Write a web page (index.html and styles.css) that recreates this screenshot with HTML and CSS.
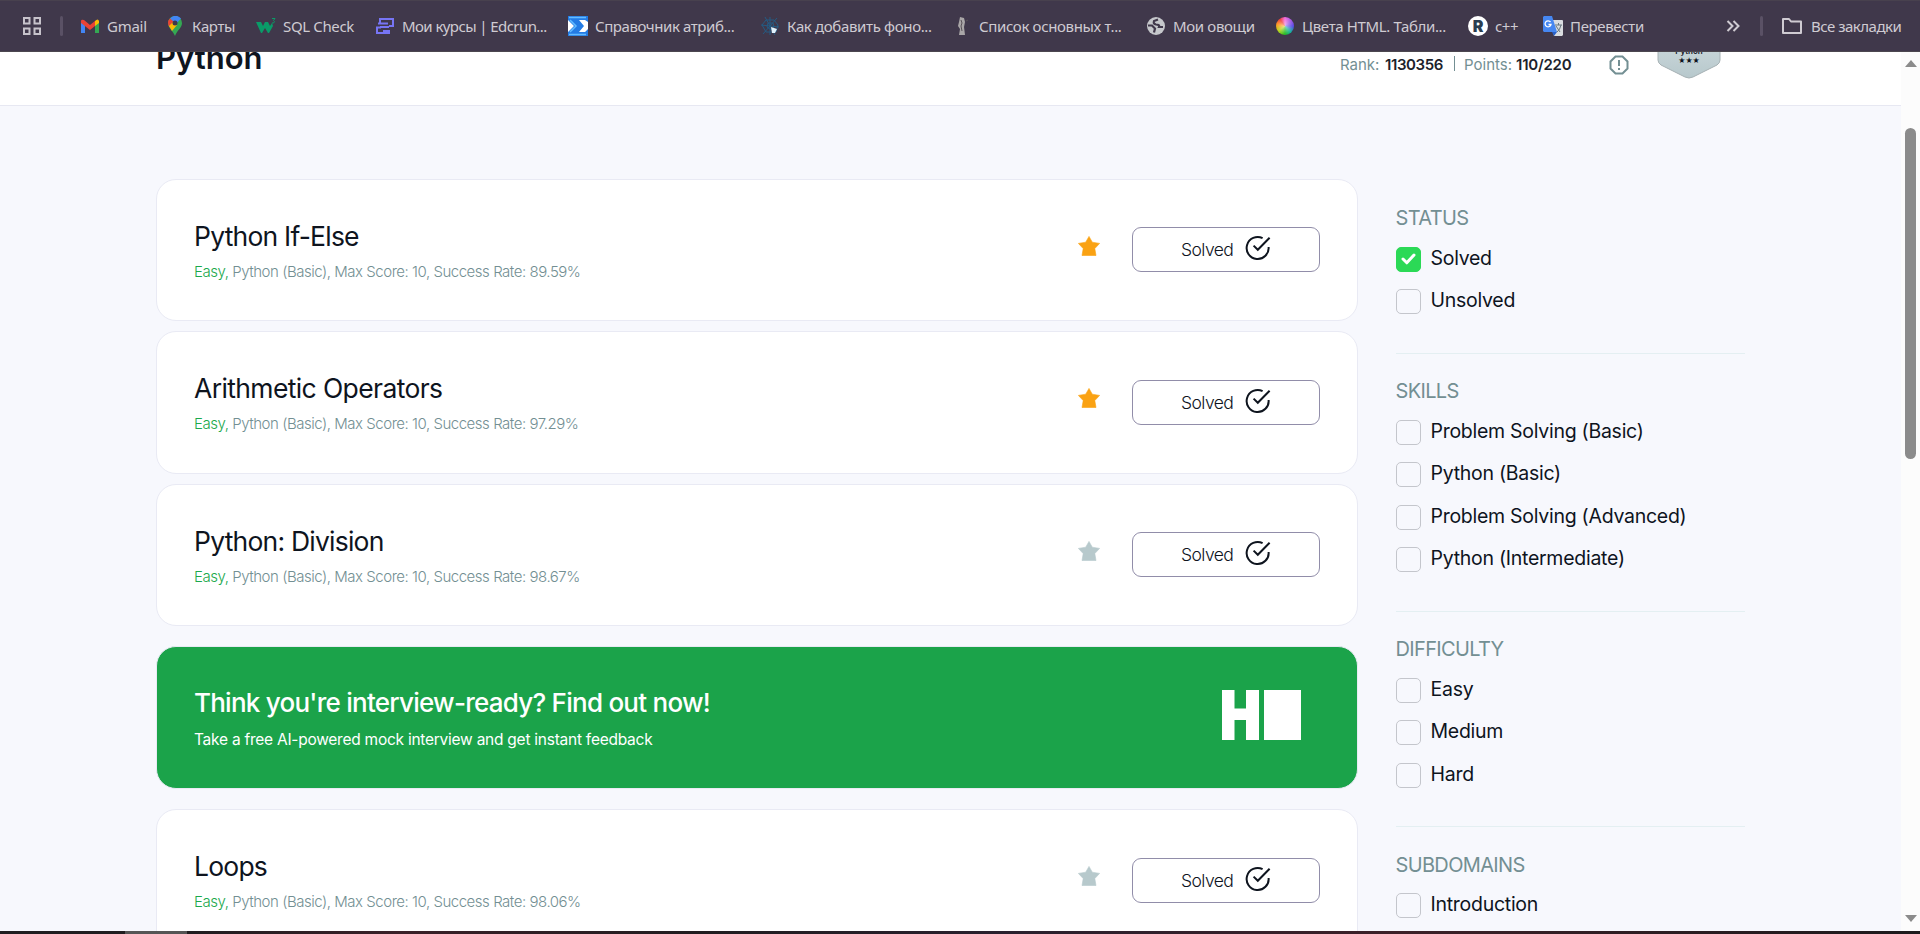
FILE: index.html
```html
<!DOCTYPE html>
<html lang="ru">
<head>
<meta charset="utf-8">
<title>Python</title>
<link rel="stylesheet" href="styles.css">
</head>
<body>
<svg width="0" height="0" class="defs">
  <symbol id="star" viewBox="0 0 22 20"><path d="M11 .4 14.300 6.200 21.600 7.400 16.800 12.600 18 19.500H4L5.200 12.600 .4 7.400 7.700 6.200Z" stroke="currentColor" stroke-width=".6" fill="currentColor" stroke-linejoin="round"/></symbol>
  <symbol id="done" viewBox="0 0 26 26"><path d="M17.600 3.200A11 11 0 1 0 23.600 12M8.600 10.600l4.200 4.200L24.600 2.800" fill="none" stroke="#0e141e" stroke-width="2"/></symbol>
</svg>
<div class="screen">
  <nav class="bookmarks">
    <svg class="apps" width="20" height="20" viewBox="0 0 20 20" fill="none" stroke="#c7c3cb" stroke-width="2"><path d="M2 2h5.500v5.500H2zM12.500 2H18v5.500h-5.500zM2 12.500h5.500V18H2zM12.500 12.500H18V18h-5.500z"/></svg>
    <i class="bar bar-left"></i>
    <a class="bm b1"><svg width="20" height="20" viewBox="0 0 20 20"><path d="M1 5v12h4V9z" fill="#4285f4"/><path d="M15 9v8h4V5z" fill="#34a853"/><path d="M15 5v5l4-3V5q-1-3-4 0z" fill="#fbbc04"/><path d="M1 7l9 7 5-4V5l-5 4-6-5q-3-1-3 1z" fill="#ea4335"/></svg><span>Gmail</span></a>
    <a class="bm b2"><svg width="20" height="20" viewBox="0 0 20 20"><path d="M3 7a7 7 0 0 1 14 0c0 5-5 7-7 13-2-5-7-8-7-13" fill="#34a853"/><path d="M5 2.500a7 7 0 0 1 11 0L10 9z" fill="#4285f4"/><path d="M5 2.500 9 6 4.500 11Q1 6 5 2.500" fill="#ea4335"/><path d="M4 10l5-5 3 4-5 6z" fill="#fbbc04"/><circle cx="10" cy="7" r="2.500" fill="#40384b"/></svg><span>Карты</span></a>
    <a class="bm b3"><svg width="20" height="20" viewBox="0 0 20 20"><path d="M0 6h5l2 4 2-4h3l2 4 2-3 1 3-4 7h-1l-3-5-3 5H5z" fill="#0a9b68"/><path d="M16 2.500h3l-1.500 2q2 1 0 2.500H16" stroke="#0a9b68" fill="none"/></svg><span>SQL Check</span></a>
    <a class="bm b4"><svg width="20" height="20" viewBox="0 0 20 20" fill="none" stroke="#7775f5" stroke-width="2"><path d="M5 7V3h13v7h-4M3 7.500h10M6 11.500H2V17h12v-2H8M5 11h9"/></svg><span>Мои курсы | Edcrun...</span></a>
    <a class="bm b5"><svg width="20" height="20" viewBox="0 0 20 20"><path d="M0 0h20v20H0z" fill="#fff"/><path d="M0 0h20v6l-3-2h-6l5 6-5 6h6l3-3v7H0v-4l6-6-6-6z" fill="#237be4"/><path d="M1 1.500h17M2 4l6 6-6 6M1 18.500h17" fill="none" stroke="#63bbff" stroke-width="1.500"/></svg><span>Справочник атриб...</span></a>
    <a class="bm b6"><svg width="20" height="20" viewBox="0 0 20 20" fill="none" stroke="#245b83"><path d="M1 9l18 2M5 1l10 18M17 2 3 18M10 1v18M6 4h8l4 5-2 7H6L2 9zM8 7h5l1 4-3 3-4-3z"/><path d="M11 11l6 2-2 4h-3z" fill="#e2f2fc" stroke="none"/></svg><span>Как добавить фоно...</span></a>
    <a class="bm b7"><svg width="20" height="20" viewBox="0 0 20 20"><path d="M8 1l4 1 1 4-1 5 1 8H7l1-6-2-3 1-4z" fill="#a9a6a7"/><path d="M9 4l1 3-1 3 1 5M14 5l2-1" stroke="#575057" stroke-width="1" fill="none"/></svg><span>Список основных т...</span></a>
    <a class="bm b8"><svg width="20" height="20" viewBox="0 0 20 20"><circle cx="10" cy="10" r="9" fill="#c5c7cb"/><path d="M12 3.500 8 5q-1 3 2 3.500 4 0 3 2.500h4M2 9.500h4l3 3-1 4" fill="none" stroke="#40384b" stroke-width="2.200"/></svg><span>Мои овощи</span></a>
    <a class="bm b9"><i class="wheel"></i><span>Цвета HTML. Табли...</span></a>
    <a class="bm b10"><i class="r-logo">R</i><span>c++</span></a>
    <a class="bm b11"><svg width="20" height="20" viewBox="0 0 20 20"><path d="M8 4h11q1 0 1 1v14l-1 1h-8z" fill="#d9dce0"/><path d="M1 0h8l5 16H1l-1-1V1z" fill="#4687f1"/><path d="M9 16h5l-3 4z" fill="#2860c8"/><path d="M12 9h7M15.500 7v2M13 10l4 6M18 9q-1 5-4 7" stroke="#67777f" fill="none"/><path d="M7.500 6A3 3 0 1 0 8 8.500H5.500" stroke="#fff" stroke-width="1.300" fill="none"/></svg><span>Перевести</span></a>
    <svg class="more" width="14" height="12" viewBox="0 0 14 12" fill="none" stroke="#cfcbd2" stroke-width="2"><path d="M1.500 1l5 5-5 5M7.500 1l5 5-5 5"/></svg>
    <i class="bar bar-right"></i>
    <a class="bm b12"><svg width="22" height="18" viewBox="0 0 22 18" fill="none" stroke="#cfcbd2" stroke-width="2" stroke-linejoin="round"><path d="M2 2h6l2 2.500h10V16H2z"/></svg><span>Все закладки</span></a>
  </nav>
  <div class="view">
    <div class="page">
      <header class="head">
        <h1>Python</h1>
        <div class="stats">
          <span class="lbl rank">Rank:</span><b class="rank-value">1130356</b><i class="sep"></i><span class="lbl points">Points:</span><b class="points-value">110/220</b>
          <svg class="info" width="20" height="20" viewBox="0 0 20 20" fill="none" stroke="#738f93" stroke-width="2"><path d="M6.500 1.500h7l5 5v7l-5 5h-7l-5-5v-7zM10 5v6M10 13v2"/></svg>
          <div class="badge"><svg width="64" height="70" viewBox="0 0 64 70"><defs><linearGradient id="bg" x2="0" y2="1"><stop stop-color="#dbe5e8"/><stop offset="1" stop-color="#b7c8cc"/></linearGradient></defs><path d="M1 1h62v50q0 3-3 5L36 68q-4 2-8 0L4 56q-3-2-3-5z" fill="url(#bg)" stroke="#a6b1b4"/></svg><span class="badge-name">Python</span><span class="badge-stars">★★★</span></div>
        </div>
      </header>
      <main class="main">
        <section class="list">
          <article class="card"><div class="info-text"><h2>Python If-Else</h2><p><em>Easy,</em> Python (Basic), Max Score: 10, Success Rate: 89.59%</p></div><svg class="star on"><use href="#star"/></svg><button>Solved<svg><use href="#done"/></svg></button></article>
          <article class="card"><div class="info-text"><h2 class="wide">Arithmetic Operators</h2><p><em>Easy,</em> Python (Basic), Max Score: 10, Success Rate: 97.29%</p></div><svg class="star on"><use href="#star"/></svg><button>Solved<svg><use href="#done"/></svg></button></article>
          <article class="card"><div class="info-text"><h2>Python: Division</h2><p><em>Easy,</em> Python (Basic), Max Score: 10, Success Rate: 98.67%</p></div><svg class="star"><use href="#star"/></svg><button>Solved<svg><use href="#done"/></svg></button></article>
          <article class="card promo"><div class="info-text"><h2>Think you're interview-ready? Find out now!</h2><p>Take a free AI-powered mock interview and get instant feedback</p></div><svg class="hr" width="79" height="50" viewBox="0 0 79 50" fill="#fff"><path d="M0 0h12.500v18.500h11.500V0h13v50H24V30H12.500v20H0zM42 0h37v50H42z"/></svg></article>
          <article class="card"><div class="info-text"><h2>Loops</h2><p><em>Easy,</em> Python (Basic), Max Score: 10, Success Rate: 98.06%</p></div><svg class="star"><use href="#star"/></svg><button>Solved<svg><use href="#done"/></svg></button></article>
        </section>
        <aside class="filters">
          <section><h3>STATUS</h3><label><i class="box checked"><svg width="15" height="12" viewBox="0 0 15 12"><path d="M2 6l3.800 3.800L13 2" fill="none" stroke="#fff" stroke-width="3" stroke-linecap="round" stroke-linejoin="round"/></svg></i><span>Solved</span></label><label><i class="box"></i><span>Unsolved</span></label></section>
          <section><h3>SKILLS</h3><label><i class="box"></i><span>Problem Solving (Basic)</span></label><label><i class="box"></i><span>Python (Basic)</span></label><label><i class="box"></i><span>Problem Solving (Advanced)</span></label><label><i class="box"></i><span>Python (Intermediate)</span></label></section>
          <section><h3>DIFFICULTY</h3><label><i class="box"></i><span>Easy</span></label><label><i class="box"></i><span>Medium</span></label><label><i class="box"></i><span>Hard</span></label></section>
          <section><h3>SUBDOMAINS</h3><label><i class="box"></i><span>Introduction</span></label></section>
        </aside>
      </main>
    </div>
    <div class="scroll"><i class="up"></i><i class="thumb"></i><i class="down"></i></div>
  </div>
  <footer class="edge"></footer>
</div>
</body>
</html>
```

FILE: styles.css
```css
* { box-sizing: border-box; }
body { margin: 0; font-family: Inter, sans-serif; color: #0e141e; }
h1, h2, h3, p { margin: 0; font-weight: 400; white-space: nowrap; }
i, em { font-style: normal; }
svg { flex: none; }
.defs { display: none; }
.screen { width: 1920px; height: 934px; overflow: hidden; display: flex; flex-direction: column; }

.bookmarks { flex: none; height: 52px; display: flex; align-items: center; background: #40384b; border-bottom: 1px solid #4c474f; border-top: 1px solid #48414e; color: #cfcbd2; padding-left: 22px; font: 15px "Noto Sans", sans-serif; }
.bm { display: flex; align-items: center; gap: 7px; white-space: nowrap; flex: none; }
.bar { width: 3px; height: 20px; border-radius: 2px; background: #5a5165; flex: none; }
.bar-left { margin: 0 17px 0 18px; }
.bm span { letter-spacing: -.35px; margin-top: -1px; }
.b1 { width: 85px; } .b2 { width: 91px; } .b3 { width: 119px; } .b4 { width: 193px; }
.b5 { width: 192px; } .b6 { width: 192px; } .b7 { width: 194px; } .b8 { width: 129px; }
.b9 { width: 193px; } .b10 { width: 75px; } .b11 { width: 183px; } .b12 { gap: 8px; }
.b1 span { letter-spacing: -.25px; }
.b4 span { letter-spacing: -.58px; }
.b5 span { letter-spacing: -.42px; }
.b12 span { letter-spacing: -.5px; }
.bar-right { margin: 0 18px 0 20px; }
.wheel { width: 18px; height: 18px; margin: 0 1px; border-radius: 50%; background: radial-gradient(#fff8, #fff0 65%), conic-gradient(#f26be0, #5b48e8 25%, #12b39c 38%, #22ba22 50%, #b9d51c 65%, #ff9a20 78%, #f03e3e 90%, #f26be0); }
.r-logo { width: 20px; height: 20px; border-radius: 50%; background: #fff; color: #2b3d50; font: 900 16px/20px Inter, sans-serif; text-align: center; }

.view { flex: none; height: 879px; display: flex; overflow: hidden; }
.page { width: 1901px; background: #f7f8fd; overflow: hidden; }
.head { height: 54px; background: #fff; border-bottom: 1px solid #e7e8f2; padding-left: 156px; display: flex; overflow: hidden; }
h1 { font-size: 31px; font-weight: 600; line-height: 38px; margin-top: -13px; width: 1184px; }
.stats { display: flex; font-size: 15px; line-height: 26px; }
.lbl { color: #738f93; }
.stats b { font-weight: 600; color: #1c222c; }
.rank { width: 45px; } .rank-value { width: 69px; letter-spacing: -.4px; }
.sep { width: 1px; height: 15px; background: #738f93; margin: 4px 9px 0 0; }
.points { width: 52px; } .points-value { width: 93px; letter-spacing: -.2px; }
.info { margin-top: 3px; }
.badge { position: relative; margin: -43px 0 0 28px; width: 64px; height: 70px; }
.badge-name, .badge-stars { position: absolute; left: 0; width: 64px; text-align: center; line-height: 10px; }
.badge-name { top: 37px; font-size: 8px; font-weight: 600; }
.badge-stars { top: 47px; font: 8px/10px "DejaVu Sans", sans-serif; }

.main { display: flex; gap: 38px; padding: 72.500px 0 0 156px; }
.list { width: 1201.500px; display: flex; flex-direction: column; gap: 10px; }
.card { height: 142.500px; flex: none; display: flex; align-items: flex-start; background: #fff; border: 1px solid #e9eaf4; border-radius: 20px; padding-left: 37px; }
.info-text { width: 884px; padding-top: 38px; }
h2 { font-size: 26.500px; line-height: 36px; letter-spacing: -.78px; }
.wide { letter-spacing: -.62px; }
.card p { font-size: 15px; line-height: 24px; margin-top: 6px; font-weight: 300; color: #738f93; letter-spacing: -.47px; }
.card em { color: #1ba94c; }
.star { width: 22px; height: 20px; margin: 56px 32px 0 0; color: #b7c9cc; }
.star.on { color: #faa213; }
button { width: 188px; height: 45px; margin-top: 47.500px; border: 1px solid #918da9; border-radius: 9px; background: #fff; display: flex; align-items: center; padding: 0 0 0 48px; color: #0e141e; font: 300 17.500px Inter, sans-serif; letter-spacing: -.55px; }
button svg { width: 26px; height: 26px; margin: -3px 0 0 12px; }
.promo { background: #1ba34a; border-color: #e9eaf4; color: #fff; margin: 10px 0; height: 143px; }
.promo h2 { font-size: 26px; font-weight: 500; letter-spacing: -.75px; }
.promo p { font-size: 15.500px; color: #fff; font-weight: 400; letter-spacing: -.25px; margin-top: 7px; }
.promo .info-text { width: 1028px; }
.hr { margin-top: 42.500px; }

.filters { width: 349px; padding-top: 26.500px; }
.filters section { border-bottom: 1px solid #e4eff2; padding-bottom: 38.500px; margin-bottom: 24.500px; }
h3 { font-size: 20px; line-height: 26px; color: #738f93; letter-spacing: -.65px; margin-bottom: 15.500px; }
label { display: flex; gap: 10px; align-items: flex-start; height: 25px; margin-bottom: 17.500px; font-size: 19.500px; line-height: 23px; letter-spacing: -.27px; white-space: nowrap; }
label:last-child { margin-bottom: 0; }
.box { width: 25px; height: 25px; border: 1px solid #c4c6cc; border-radius: 5px; display: flex; align-items: center; justify-content: center; flex: none; }
.checked { background: #2bd956; border-color: #2bd956; }

.scroll { width: 19px; background: #fcfcfc; display: flex; flex-direction: column; align-items: center; padding: 8px 0 9px; }
.up, .down { border: 6.500px solid transparent; border-top: 0; border-bottom: 7px solid #8b8b8b; }
.thumb { width: 11px; height: 331px; margin-top: 61px; border-radius: 6px; background: #8b8b8b; }
.down { border-bottom: 0; border-top: 7px solid #8b8b8b; margin-top: auto; }
.edge { height: 3px; background: linear-gradient(90deg, #201d20 0 125px, #555 125px 187px, #201d20 187px, #3a2028 400px, #201d20 700px, #29202e 1000px, #3c2028 1400px, #1c1a1c); }
```
